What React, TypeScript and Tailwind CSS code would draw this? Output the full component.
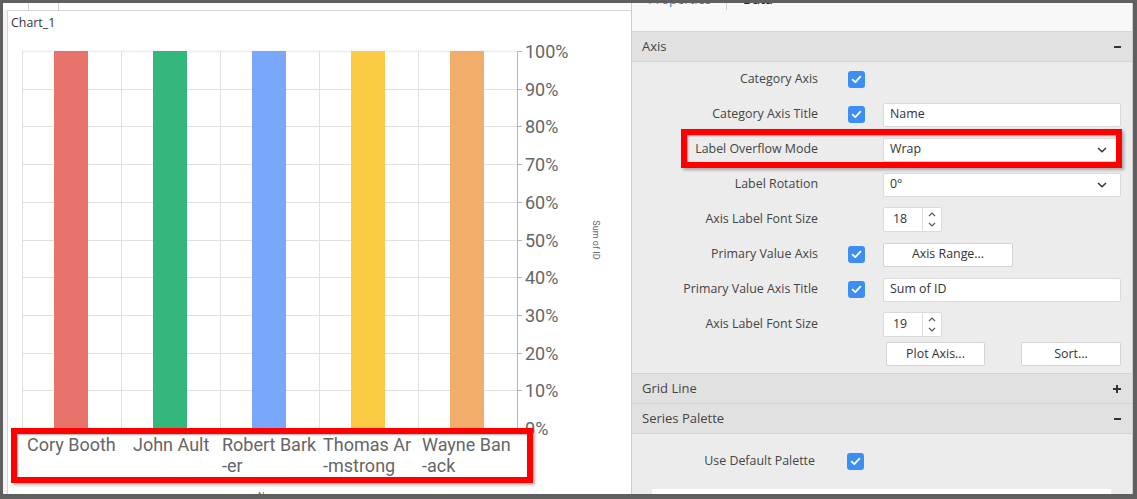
import React from "react";

type Category = { lines: string[]; x: number; color: string };

const categories: Category[] = [
  { lines: ["Cory Booth"], x: 27, color: "#e8736a" },
  { lines: ["John Ault"], x: 133, color: "#34b77b" },
  { lines: ["Robert Bark", "-er"], x: 222, color: "#79a8fb" },
  { lines: ["Thomas Ar", "-mstrong"], x: 323, color: "#fbcb45" },
  { lines: ["Wayne Ban", "-ack"], x: 422, color: "#f2ad6a" },
];

const TOP = 51;
const STEP = 37.7;
const BOTTOM = TOP + STEP * 10;
const COLS = [22, 121, 220, 319, 418, 517];

function ChartSvg() {
  const ticks = Array.from({ length: 11 }, (_, i) => i);
  return (
    <svg width="623" height="462" viewBox="8 32 623 462" className="block">
      {ticks.map((i) => (
        <line
          key={"h" + i}
          x1={22}
          x2={517}
          y1={Math.round(TOP + i * STEP) + 0.5}
          y2={Math.round(TOP + i * STEP) + 0.5}
          stroke={i === 0 ? "#f0f0f0" : "#e0e0e0"}
          strokeWidth={i === 0 ? 2 : 1}
        />
      ))}
      {COLS.slice(0, 5).map((x) => (
        <line key={"v" + x} x1={x + 0.5} x2={x + 0.5} y1={TOP} y2={BOTTOM + 4} stroke="#e0e0e0" />
      ))}
      {categories.map((c, i) => (
        <rect key={"b" + i} x={COLS[i] + 32} y={TOP} width={34} height={BOTTOM - TOP} fill={c.color} />
      ))}
      <line x1={517.5} x2={517.5} y1={TOP} y2={BOTTOM + 2} stroke="#b5b5b5" />
      {ticks.map((i) => {
        const y = Math.round(TOP + i * STEP) + 0.5;
        return (
          <g key={"t" + i}>
            <line x1={517} x2={522} y1={y} y2={y} stroke="#b5b5b5" />
            <text x={525} y={y + 6} fontFamily="Roboto, sans-serif" fontSize="18" fill="#666">
              {100 - i * 10}%
            </text>
          </g>
        );
      })}
      <text
        transform="translate(593 240) rotate(90)"
        textAnchor="middle"
        fontFamily="Roboto, sans-serif"
        fontSize="9"
        fill="#666"
      >
        Sum of ID
      </text>
      {categories.map((c, i) =>
        c.lines.map((line, j) => (
          <text
            key={"l" + i + j}
            x={c.x}
            y={450.5 + j * 21.5}
            fontFamily="Roboto, sans-serif"
            fontSize="18"
            fill="#666"
          >
            {line}
          </text>
        ))
      )}
      <text x={270} y={499} textAnchor="middle" fontFamily="Roboto, sans-serif" fontSize="9" fill="#666">
        Name
      </text>
    </svg>
  );
}

function Check() {
  return (
    <span className="flex h-[17px] w-[17px] shrink-0 items-center justify-center rounded-[3px] bg-[#3d8ef2]">
      <svg width="11" height="9" viewBox="0 0 11 9">
        <path d="M1.6 4.6 L4.3 7.2 L9.4 1.6" stroke="white" strokeWidth="1.8" fill="none" strokeLinecap="round" strokeLinejoin="round" />
      </svg>
    </span>
  );
}

function Chevron() {
  return (
    <svg width="10" height="6" viewBox="0 0 10 6" className="absolute right-[13px] top-1/2 -translate-y-1/2">
      <path d="M1 1 L5 4.8 L9 1" stroke="#333" strokeWidth="1.5" fill="none" />
    </svg>
  );
}

function TextBox({ value, select }: { value: string; select?: boolean }) {
  return (
    <div className="relative flex h-[24px] w-[238px] items-center rounded-[2px] border border-[#dadada] bg-white pl-[6px] text-[12.4px] text-[#333]">
      {value}
      {select ? <Chevron /> : null}
    </div>
  );
}

function Spinner({ value }: { value: string }) {
  return (
    <div className="flex h-[25px] w-[59px] rounded-[2px] border border-[#dadada] bg-white text-[12.4px] text-[#333]">
      <div className="flex w-[39px] items-center border-r border-[#dadada] pl-[9px]">{value}</div>
      <div className="flex flex-1 flex-col items-center justify-center gap-[5px]">
        <svg width="8" height="5" viewBox="0 0 8 5">
          <path d="M1 4 L4 1 L7 4" stroke="#555" strokeWidth="1.1" fill="none" />
        </svg>
        <svg width="8" height="5" viewBox="0 0 8 5">
          <path d="M1 1 L4 4 L7 1" stroke="#555" strokeWidth="1.1" fill="none" />
        </svg>
      </div>
    </div>
  );
}

function Button({ label, w }: { label: string; w: string }) {
  return (
    <div className={`flex h-[24px] items-center justify-center rounded-[2px] border border-[#d3d3d3] bg-white text-[12.4px] text-[#333] ${w}`}>
      {label}
    </div>
  );
}

function Row({ label, check, children }: { label: string; check?: boolean; children?: React.ReactNode }) {
  return (
    <div className="flex h-[35px] items-center">
      <div className="w-[186px] text-right text-[12.4px] text-[#444]">{label}</div>
      <div className="ml-[30px] w-[17px]">{check ? <Check /> : null}</div>
      <div className="ml-[18px]">{children}</div>
    </div>
  );
}

function Header({ title, open }: { title: string; open: boolean }) {
  return (
    <div className="flex h-[30px] items-center justify-between border-b border-[#d3d3d3] bg-[#e1e1e1] pl-[10px] pr-[11px] text-[13px] text-[#444]">
      <span>{title}</span>
      {open ? (
        <span className="h-[2px] w-[7px] bg-[#333]" />
      ) : (
        <span className="relative h-[8px] w-[8px]">
          <span className="absolute left-0 top-[3px] h-[2px] w-[8px] bg-[#333]" />
          <span className="absolute left-[3px] top-0 h-[8px] w-[2px] bg-[#333]" />
        </span>
      )}
    </div>
  );
}

export default function App() {
  return (
    <div className="flex h-[499px] w-[1137px] bg-[#5f5f5f] pb-[5px] pl-[3px] pr-[4px] pt-[3px] font-['Open_Sans',sans-serif]">
      <div className="flex w-[628px] flex-col bg-[#f4f4f4]">
        <div className="flex h-[7px] bg-white">
          <div className="ml-[25px] h-full w-px bg-[#d0d0d0]" />
          <div className="ml-[29px] h-full w-px bg-[#d0d0d0]" />
        </div>
        <div className="relative ml-[4px] flex-1 border-l border-t border-[#d6d6d6] bg-white">
          <div className="h-[21px] pl-[3px] pt-[4px] text-[12.4px] leading-[16px] text-[#333]">Chart_1</div>
          <ChartSvg />
          <div className="absolute left-[3px] top-[417px] h-[55px] w-[522px] border-[6px] border-[#ff0000] shadow-[inset_1px_1px_2px_rgba(0,0,0,0.35),2px_2px_3px_rgba(0,0,0,0.3)]" />
        </div>
      </div>

      <div className="flex w-[502px] flex-col border-l border-r border-[#cccccc] bg-[#ececec]">
        <div className="flex h-[29px] overflow-hidden border-b border-[#d6d6d6] bg-[#f8f8f8] text-[13px] leading-[16px]">
          <span className="ml-[16px] mt-[-12px] text-[#1e88e5]">Properties</span>
          <span className="ml-[15px] h-[7px] w-px bg-[#cfcfcf]" />
          <span className="ml-[16px] mt-[-12px] font-semibold text-[#222]">Data</span>
        </div>
        <Header title="Axis" open />
        <div className="flex flex-col pb-[7px]">
          <Row label="Category Axis" check />
          <Row label="Category Axis Title" check>
            <TextBox value="Name" />
          </Row>
          <div className="relative">
            <Row label="Label Overflow Mode">
              <TextBox value="Wrap" select />
            </Row>
            <div className="absolute left-[49px] top-[-3px] h-[39px] w-[441px] border-[6px] border-[#ff0000] shadow-[inset_1px_1px_2px_rgba(0,0,0,0.35),2px_2px_3px_rgba(0,0,0,0.3)]" />
          </div>
          <Row label="Label Rotation">
            <TextBox value="0°" select />
          </Row>
          <Row label="Axis Label Font Size">
            <Spinner value="18" />
          </Row>
          <Row label="Primary Value Axis" check>
            <Button label="Axis Range..." w="w-[130px]" />
          </Row>
          <Row label="Primary Value Axis Title" check>
            <TextBox value="Sum of ID" />
          </Row>
          <Row label="Axis Label Font Size">
            <Spinner value="19" />
          </Row>
          <div className="flex h-[24px] justify-between pl-[254px] pr-[11px]">
            <Button label="Plot Axis..." w="w-[99px]" />
            <Button label="Sort..." w="w-[100px]" />
          </div>
        </div>
        <div className="border-t border-[#d3d3d3]">
          <Header title="Grid Line" open={false} />
        </div>
        <Header title="Series Palette" open />
        <div className="mt-[10px] flex h-[35px] items-center">
          <div className="w-[183px] text-right text-[12.4px] text-[#444]">Use Default Palette</div>
          <div className="ml-[32px]">
            <Check />
          </div>
        </div>
        <div className="ml-[20px] mt-[10px] w-[459px] flex-1 bg-white" />
      </div>
    </div>
  );
}
